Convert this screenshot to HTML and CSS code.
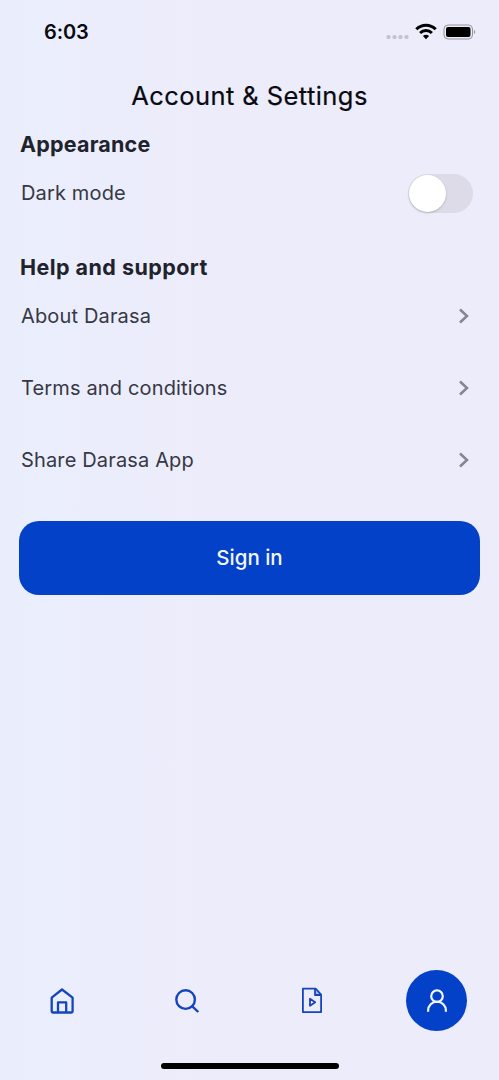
FILE: index.html
```html
<!DOCTYPE html>
<html lang="en">
<head>
<meta charset="utf-8">
<title>Account &amp; Settings</title>
<link rel="stylesheet" href="styles.css">
</head>
<body>
<div class="screen">
  <header class="status">
    <span class="time">6:03</span>
    <svg class="status-icons" width="92" height="20" viewBox="0 0 92 20">
      <g fill="#c3c4d0"><rect x="2.500" y="14" width="4" height="4" rx="1.500"/><rect x="8.500" y="14" width="4" height="4" rx="1.500"/><rect x="14.500" y="14" width="4" height="4" rx="1.500"/><rect x="20.500" y="14" width="4" height="4" rx="1.500"/></g>
      <g fill="none" stroke="#000" stroke-width="3"><path d="M32.300 8.200a13.600 13.600 0 0 1 19.400 0"/><path d="M36.100 12a8.300 8.300 0 0 1 11.800 0"/></g>
      <path d="M38.900 15.100a4.500 4.500 0 0 1 6.200 0L42 18.200z"/>
      <rect x="60" y="4" width="28.500" height="14" rx="4" fill="none" stroke="#92939d"/>
      <rect x="62" y="6" width="24.500" height="10" rx="2"/>
      <path d="M90 9v4a2.200 2.200 0 0 0 0-4" fill="#92939d"/>
    </svg>
  </header>
  <h1 class="title">Account &amp; Settings</h1>
  <main class="content">
    <h2 class="heading">Appearance</h2>
    <div class="row first"><span>Dark mode</span><span class="switch"><span class="knob"></span></span></div>
    <h2 class="heading help">Help and support</h2>
    <div class="row first about"><span>About Darasa</span><svg class="chevron" width="12" height="18" viewBox="0 0 12 18"><path d="M2 2.500 9 9l-7 6.500"/></svg></div>
    <div class="row"><span>Terms and conditions</span><svg class="chevron" width="12" height="18" viewBox="0 0 12 18"><path d="M2 2.500 9 9l-7 6.500"/></svg></div>
    <div class="row"><span>Share Darasa App</span><svg class="chevron" width="12" height="18" viewBox="0 0 12 18"><path d="M2 2.500 9 9l-7 6.500"/></svg></div>
    <button class="sign-in">Sign in</button>
  </main>
  <nav class="tabs">
    <a class="tab"><svg width="28" height="30" viewBox="0 0 28 30" stroke-width="2.300"><path d="M3.700 11.600 14 3.500l10.600 8.100v13.700q0 1.200-1.200 1.200H4.900q-1.200 0-1.200-1.200z"/><path d="M10 26.500V16.400h8.200v10.100"/></svg></a>
    <a class="tab"><svg width="28" height="30" viewBox="0 0 28 30" stroke-width="2.400"><circle cx="12.600" cy="13.600" r="9.300"/><path d="m19.300 20.300 6 5.700"/></svg></a>
    <a class="tab"><svg width="28" height="30" viewBox="0 0 28 30" stroke-width="1.800"><path d="M4.900 2.700h12.700l5.500 6v17.400H4.900z"/><path d="M17 3v6h5.800M12 12.800v7l5.200-3.500z"/><path d="M17.500 4v4.500h4.500z" fill="#1545bd" fill-opacity=".3" stroke="none"/></svg></a>
    <a class="tab"><span class="active"><svg width="28" height="30" viewBox="0 0 28 30" stroke-width="2.200"><circle cx="14" cy="10.200" r="5.800"/><path d="M5.100 25.700v-1.200a8.900 8.900 0 0 1 17.800 0v1.200"/></svg></span></a>
  </nav>
  <div class="home-indicator"></div>
</div>
</body>
</html>
```
FILE: styles.css
```css
* { box-sizing: border-box; }
body { margin: 0; font-family: Inter, "Liberation Sans", sans-serif; }
.screen {
  height: 1080px;
  display: flex;
  flex-direction: column;
  background: linear-gradient(90deg, #eaeefc 0, #edecfb 45%, #edecfb 100%);
}
.status {
  height: 64px;
  padding: 0 23px 0 44px;
  display: flex;
  align-items: center;
  justify-content: space-between;
}
.status-icons { margin-bottom: 2px; }
.time { font-size: 20px; font-weight: 600; letter-spacing: -.1px; color: #090a10; }
.title {
  height: 64px;
  margin: 0;
  font-size: 25.500px;
  font-weight: 400;
  line-height: 63px;
  letter-spacing: .430px;
  text-align: center;
  color: #090a10;
  -webkit-text-stroke: .200px #090a10;
}
.content { flex-shrink: 0; padding: 0 19px; }
.heading {
  height: 33px;
  margin: 0;
  padding-left: 1px;
  font-size: 21.500px;
  font-weight: 700;
  line-height: 33px;
  letter-spacing: .200px;
  color: #20222c;
}
.help { margin-top: 26px; letter-spacing: .450px; }
.row {
  height: 72px;
  padding: 0 10px 0 2px;
  display: flex;
  align-items: center;
  justify-content: space-between;
  font-size: 20px;
  letter-spacing: .150px;
  color: #363844;
}
.first { height: 64px; }
.about { margin-bottom: 4px; }
.switch {
  width: 65px;
  height: 39px;
  margin-right: -3px;
  padding: 1px;
  border-radius: 20px;
  background: #dcdbe7;
}
.knob {
  display: block;
  width: 37px;
  height: 37px;
  border-radius: 50%;
  background: #fff;
  box-shadow: 0 1px 2px #85869080;
}
.chevron { fill: none; stroke: #858491; stroke-width: 2.500; }
.sign-in {
  width: 461px;
  height: 74px;
  margin-top: 25px;
  padding: 0 0 1px;
  border: 0;
  border-radius: 20px;
  background: #0341c8;
  color: #f2f6ff;
  font: 500 20.500px Inter, sans-serif;
}
.tabs {
  height: 61px;
  margin-top: auto;
  flex-shrink: 0;
  display: grid;
  grid-template-columns: repeat(4, 1fr);
}
.tab { display: flex; align-items: center; justify-content: center; }
.tab svg { fill: none; stroke: #1545bd; stroke-linejoin: round; }
.active {
  width: 61px;
  height: 61px;
  display: flex;
  align-items: center;
  justify-content: center;
  border-radius: 50%;
  background: #0341c8;
}
.tab .active svg { stroke: #f3f6ff; }
.home-indicator {
  width: 178px;
  height: 6px;
  margin: 32px auto 11px;
  flex-shrink: 0;
  border-radius: 3px;
  background: #000;
}
```
